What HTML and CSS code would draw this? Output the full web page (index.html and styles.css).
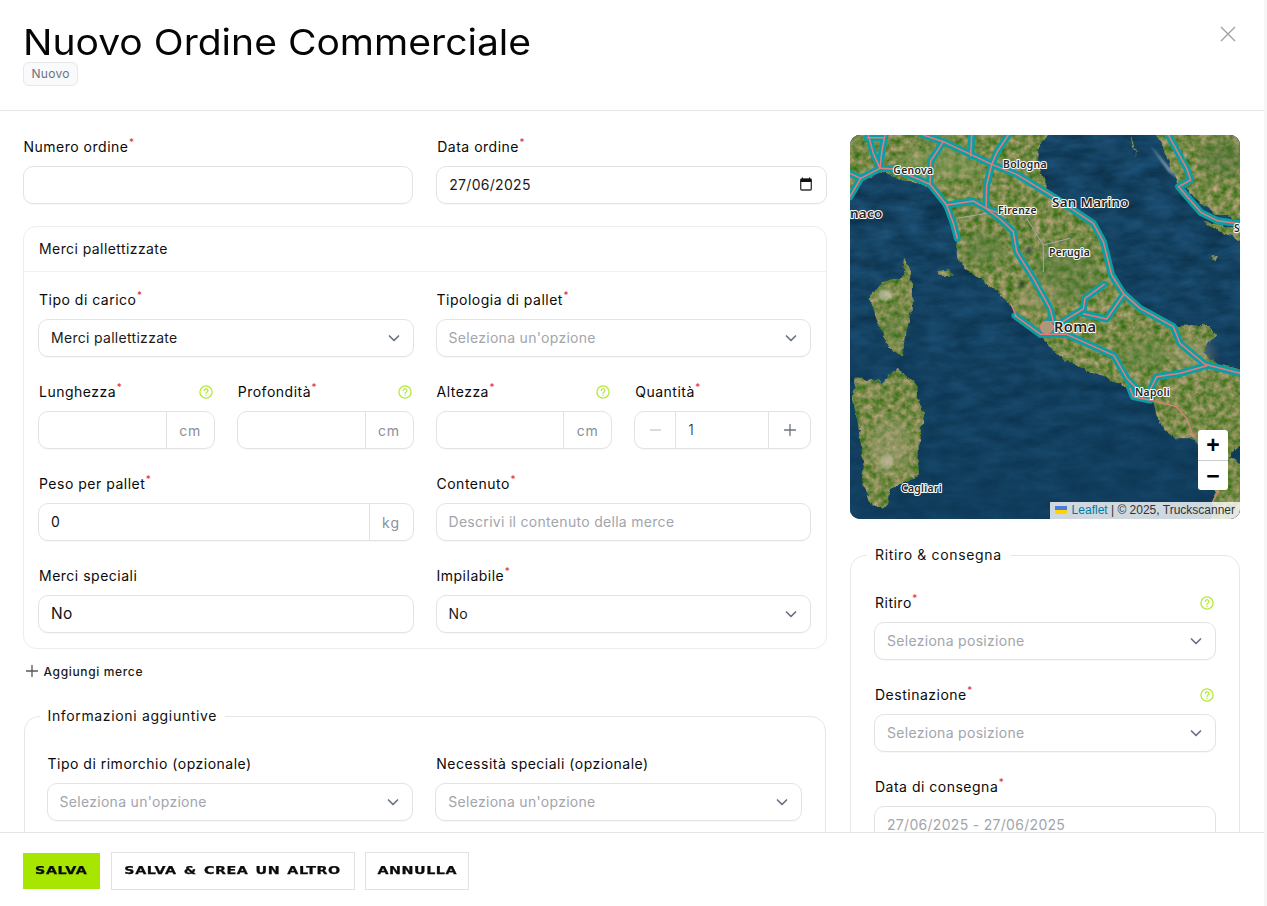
FILE: index.html
```html
<!DOCTYPE html>
<html lang="it">
<head>
<meta charset="utf-8">
<title>Nuovo Ordine Commerciale</title>
<link rel="stylesheet" href="styles.css">
</head>
<body>
<svg class="sprite" aria-hidden="true">
  <defs>
    <symbol id="chev" viewBox="0 0 16 16"><path d="M3.5 6l4.5 4.5L12.5 6" fill="none" stroke="currentColor" stroke-width="1.7" stroke-linecap="round" stroke-linejoin="round"/></symbol>
    <symbol id="help" viewBox="0 0 14 14"><circle cx="7" cy="7" r="6.1" fill="none" stroke="currentColor" stroke-width="1.3"/><path d="M5.3 5.5a1.8 1.8 0 1 1 2.8 1.5c-.7.4-1.1.8-1.1 1.4" fill="none" stroke="currentColor" stroke-width="1.2" stroke-linecap="round"/><circle cx="7" cy="10.2" r=".7" fill="currentColor"/></symbol>
    <symbol id="plus" viewBox="0 0 14 14"><path d="M7 1.5v11M1.5 7h11" fill="none" stroke="currentColor" stroke-width="1.3" stroke-linecap="round"/></symbol>
  </defs>
</svg>
<div class="page">
  <header class="head">
    <div>
      <h1 class="title">Nuovo Ordine Commerciale</h1>
      <span class="badge">Nuovo</span>
    </div>
    <svg class="close" viewBox="0 0 16 16"><path d="M1 1l14 14M15 1L1 15" fill="none" stroke="currentColor" stroke-width="1.4"/></svg>
  </header>

  <main class="body">
    <section class="left">
      <div class="grid2 top-grid">
        <div class="field">
          <div class="label"><span>Numero ordine<sup>*</sup></span></div>
          <div class="control"></div>
        </div>
        <div class="field">
          <div class="label"><span>Data ordine<sup>*</sup></span></div>
          <div class="control between">
            <span class="value date-value">27/06/2025</span>
            <svg class="cal" viewBox="0 0 12 14"><path d="M2.5 0.5v2M9.5 0.5v2" stroke="#111" stroke-width="1.2"/><rect x="0.7" y="2" width="10.6" height="11" rx="1" fill="none" stroke="#333" stroke-width="1.3"/><rect x="0.7" y="2" width="10.6" height="3" fill="#111"/></svg>
          </div>
        </div>
      </div>

      <div class="card">
        <div class="card-head">Merci pallettizzate</div>
        <div class="grid4">
          <div class="field span2">
            <div class="label"><span>Tipo di carico<sup>*</sup></span></div>
            <div class="control between"><span class="value">Merci pallettizzate</span><svg class="chev"><use href="#chev"/></svg></div>
          </div>
          <div class="field span2">
            <div class="label"><span>Tipologia di pallet<sup>*</sup></span></div>
            <div class="control between"><span class="placeholder">Seleziona un'opzione</span><svg class="chev"><use href="#chev"/></svg></div>
          </div>

          <div class="field">
            <div class="label"><span>Lunghezza<sup>*</sup></span><svg class="help"><use href="#help"/></svg></div>
            <div class="control joined"><span class="grow"></span><span class="suffix">cm</span></div>
          </div>
          <div class="field">
            <div class="label"><span>Profondità<sup>*</sup></span><svg class="help"><use href="#help"/></svg></div>
            <div class="control joined"><span class="grow"></span><span class="suffix">cm</span></div>
          </div>
          <div class="field">
            <div class="label"><span>Altezza<sup>*</sup></span><svg class="help"><use href="#help"/></svg></div>
            <div class="control joined"><span class="grow"></span><span class="suffix">cm</span></div>
          </div>
          <div class="field">
            <div class="label"><span>Quantità<sup>*</sup></span></div>
            <div class="control joined">
              <span class="step step-off"></span>
              <span class="grow qty">1</span>
              <span class="step step-on"><svg class="step-icon"><use href="#plus"/></svg></span>
            </div>
          </div>

          <div class="field span2">
            <div class="label"><span>Peso per pallet<sup>*</sup></span></div>
            <div class="control joined"><span class="grow qty-wide">0</span><span class="suffix suffix-kg">kg</span></div>
          </div>
          <div class="field span2">
            <div class="label"><span>Contenuto<sup>*</sup></span></div>
            <div class="control"><span class="placeholder">Descrivi il contenuto della merce</span></div>
          </div>

          <div class="field span2">
            <div class="label"><span>Merci speciali</span></div>
            <div class="control"><span class="value value-large">No</span></div>
          </div>
          <div class="field span2">
            <div class="label"><span>Impilabile<sup>*</sup></span></div>
            <div class="control between"><span class="value">No</span><svg class="chev"><use href="#chev"/></svg></div>
          </div>
        </div>
      </div>

      <button class="add" type="button"><svg class="add-icon"><use href="#plus"/></svg>Aggiungi merce</button>

      <fieldset class="group group-info">
        <legend>Informazioni aggiuntive</legend>
        <div class="grid2 info-grid">
          <div class="field">
            <div class="label"><span>Tipo di rimorchio (opzionale)</span></div>
            <div class="control between"><span class="placeholder">Seleziona un'opzione</span><svg class="chev"><use href="#chev"/></svg></div>
          </div>
          <div class="field">
            <div class="label"><span>Necessità speciali (opzionale)</span></div>
            <div class="control between"><span class="placeholder">Seleziona un'opzione</span><svg class="chev"><use href="#chev"/></svg></div>
          </div>
        </div>
      </fieldset>
    </section>

    <aside class="right">
      <div class="map">
        <svg class="map-art" viewBox="30 30 1170 1152">
          <defs>
            <filter id="landTex" x="0" y="0" width="100%" height="100%" color-interpolation-filters="sRGB">
              <feTurbulence type="fractalNoise" baseFrequency="0.035" numOctaves="3" seed="3" result="warp"/>
              <feDisplacementMap in="SourceGraphic" in2="warp" scale="22" xChannelSelector="R" yChannelSelector="G" result="shape"/>
              <feTurbulence type="fractalNoise" baseFrequency="0.05" numOctaves="5" seed="11" result="noise"/>
              <feColorMatrix in="noise" values="0.75 0 0 0 0.09  0.3 0 0 0 0.39  0.6 0 0 0 -0.02  0 0 0 0 1" result="tex"/>
              <feComposite in="tex" in2="shape" operator="in"/>
            </filter>
            <filter id="seaTex" x="0" y="0" width="100%" height="100%" color-interpolation-filters="sRGB">
              <feTurbulence type="fractalNoise" baseFrequency="0.012 0.03" numOctaves="4" seed="4"/>
              <feColorMatrix values="0.1 0 0 0 0.03  0.18 0 0 0 0.17  0.25 0 0 0 0.26  0 0 0 0 1"/>
              <feComposite in2="SourceAlpha" operator="in"/>
            </filter>
            <filter id="soft"><feGaussianBlur stdDeviation="16"/></filter>
            <filter id="softer"><feGaussianBlur stdDeviation="3"/></filter>
            <linearGradient id="deep" x1="0" y1="0" x2="0" y2="1">
              <stop offset="0.3" stop-color="#0e3a5a" stop-opacity="0"/>
              <stop offset="1" stop-color="#0e3a5a" stop-opacity=".6"/>
            </linearGradient>
            <g id="roads">
              <path d="M250 30L310 50L400 92L455 118L530 148L640 215L700 255L760 295L790 350L815 450L850 505L900 550L1000 605L1020 655L1095 718L1200 745"/>
              <path d="M395 30L392 92"/>
              <path d="M505 30L472 80L455 118L440 180L438 250L480 282L520 320L530 380L580 460L630 550L640 590L622 590"/>
              <path d="M120 130L165 132L270 178L320 240L340 295L352 340"/>
              <path d="M320 240L400 228L438 250L470 262"/>
              <path d="M310 50L272 108L270 178"/>
              <path d="M85 30L100 85L120 130L62 160L30 215"/>
              <path d="M135 30L125 82L120 130M30 145L62 160M82 38L132 38"/>
              <path d="M525 572L602 628L680 628L822 692L862 762L892 792L930 812"/>
              <path d="M668 590L730 552L735 520L792 478"/>
              <path d="M730 566L800 582L850 510"/>
              <path d="M1100 722L1020 745L950 755L930 795"/>
              <path d="M985 30L1040 130L1052 165L1016 185L1082 262L1132 287L1200 296"/>
              <path d="M870 790L880 815L930 825"/>
            </g>
          </defs>
          <rect x="30" y="30" width="1170" height="1152" filter="url(#seaTex)"/>
          <rect x="30" y="30" width="1170" height="1152" fill="url(#deep)"/>
          <g filter="url(#landTex)">
            <path d="M20 20H632L596 68L590 110L604 150L622 200L700 258L762 292L790 350L815 440L850 500L905 550L1000 602L1098 600L1125 625L1090 682L1132 716L1220 738V945L1180 975L1170 1000L1220 1020V1200H1112L1125 1100L1105 1060L1090 990L1055 940L1005 940L960 900L940 832L885 820L860 790L800 760L720 730L640 680L600 630L530 580L505 530L430 470L356 412L350 345L330 265L272 190L125 140L60 170L20 205Z"/>
            <path d="M195 402L210 420L216 480L215 560L182 695L140 655L112 595L85 522L128 472L186 455Z"/>
            <path d="M170 728L226 772L250 868L236 950L236 1052L150 1092L140 1142L100 1148L62 1072L72 1000L35 800L50 760L130 772Z"/>
            <path d="M950 20H1220V292L1130 268L1085 235L1016 178L985 110Z"/>
            <path d="M870 30L892 95L875 60Z"/>
            <path d="M1090 290L1220 310V355L1140 320Z"/>
            <path d="M295 438L335 432L340 452L300 452Z"/>
            <path d="M1105 395L1140 390L1130 405Z"/>
          </g>
          <g filter="url(#soft)" opacity=".4">
            <ellipse cx="680" cy="450" rx="100" ry="80" fill="#4e7a38"/>
            <ellipse cx="430" cy="370" rx="60" ry="50" fill="#4e7a38"/>
            <ellipse cx="910" cy="690" rx="70" ry="45" fill="#5a8440"/>
            <ellipse cx="1150" cy="100" rx="70" ry="50" fill="#4a6d3a"/>
            <ellipse cx="160" cy="600" rx="25" ry="50" fill="#4e7a38"/>
            <ellipse cx="300" cy="120" rx="120" ry="50" fill="#85a062"/>
            <ellipse cx="1060" cy="690" rx="60" ry="45" fill="#b2a98a"/>
            <ellipse cx="150" cy="960" rx="60" ry="80" fill="#b0a684"/>
            <ellipse cx="600" cy="520" rx="60" ry="40" fill="#a99f78"/>
          </g>
          <g filter="url(#softer)" opacity=".6">
            <path d="M930 60L1020 165L985 140Z" fill="#c7d3d8"/>
            <ellipse cx="135" cy="510" rx="20" ry="18" fill="#cfcab8"/>
            <ellipse cx="140" cy="1010" rx="20" ry="24" fill="#c7bfa2"/>
            <circle cx="545" cy="478" r="9" fill="#1d2a25"/>
            <circle cx="566" cy="376" r="9" fill="#1d3a48"/>
          </g>
          <g fill="none" stroke-linejoin="round" stroke-linecap="round">
            <path d="M560 280L610 360L610 440M610 360L690 340M350 280L440 265" stroke="#a9a7b4" stroke-width="3"/>
            <use href="#roads" class="road-casing"/>
            <use href="#roads" class="road-core"/>
            <path d="M930 825L1010 845L1040 880L1060 935M1135 1100L1118 1130M512 535L528 572" stroke="#e87c7c" stroke-width="3.5"/>
            <circle cx="620" cy="607" r="18" stroke="#e87c7c" stroke-width="4" fill="#a89a78"/>
          </g>
          <g class="map-labels">
            <text class="city" x="160" y="146">Genova</text>
            <text class="city" x="489" y="128">Bologna</text>
            <text class="city" x="474" y="266">Firenze</text>
            <text class="city" x="627" y="392">Perugia</text>
            <text class="city" x="885" y="812">Napoli</text>
            <text class="city" x="183" y="1100">Cagliari</text>
            <text class="city" x="1182" y="320">S</text>
            <text class="major" x="636" y="246">San Marino</text>
            <text class="major" x="30" y="278">naco</text>
            <text class="major major-lg" x="642" y="620">Roma</text>
          </g>
        </svg>
        <div class="zoom-ctl">
          <span class="zoom-btn">+</span>
          <span class="zoom-btn">−</span>
        </div>
        <div class="attrib">
          <svg class="flag" viewBox="0 0 12 8"><rect width="12" height="4" fill="#4c7be1"/><rect y="4" width="12" height="4" fill="#ffd500"/></svg>
          <span class="leaflet">Leaflet</span> | © 2025, Truckscanner
        </div>
      </div>

      <fieldset class="group group-route">
        <legend>Ritiro &amp; consegna</legend>
        <div class="stack">
          <div class="field">
            <div class="label"><span>Ritiro<sup>*</sup></span><svg class="help"><use href="#help"/></svg></div>
            <div class="control between"><span class="placeholder">Seleziona posizione</span><svg class="chev"><use href="#chev"/></svg></div>
          </div>
          <div class="field">
            <div class="label"><span>Destinazione<sup>*</sup></span><svg class="help"><use href="#help"/></svg></div>
            <div class="control between"><span class="placeholder">Seleziona posizione</span><svg class="chev"><use href="#chev"/></svg></div>
          </div>
          <div class="field">
            <div class="label"><span>Data di consegna<sup>*</sup></span></div>
            <div class="control"><span class="placeholder">27/06/2025 - 27/06/2025</span></div>
          </div>
        </div>
      </fieldset>
    </aside>
  </main>

  <footer class="foot">
    <button class="btn btn-primary" type="button"><span class="btn-text">SALVA</span></button>
    <button class="btn btn-again" type="button"><span class="btn-text">SALVA &amp; CREA UN ALTRO</span></button>
    <button class="btn btn-cancel" type="button"><span class="btn-text">ANNULLA</span></button>
  </footer>
</div>
</body>
</html>
```

FILE: styles.css
```css
* { box-sizing: border-box; }
html, body { margin: 0; height: 100%; overflow: hidden; }
body {
  background: #f6f6f6;
  color: #111;
  font-family: "Inter", "Liberation Sans", sans-serif;
  font-size: 14px;
  letter-spacing: .3px;
}
.sprite { width: 0; height: 0; display: block; }

.page {
  width: calc(100% - 3px);
  height: 100%;
  background: #fff;
  display: flex;
  flex-direction: column;
  overflow: hidden;
}

/* header */
.head {
  flex: none;
  height: 111px;
  border-bottom: 1px solid #e5e5e5;
  padding: 22px 28px 0 23px;
  display: flex;
  justify-content: space-between;
  align-items: flex-start;
}
.title {
  margin: 0;
  font-size: 36px;
  line-height: 40px;
  font-weight: 400;
  letter-spacing: 0;
  color: #050505;
  white-space: nowrap;
  transform: scaleX(1.085);
  transform-origin: left center;
}
.badge {
  display: inline-block;
  height: 24px;
  line-height: 22px;
  padding: 0 7.5px;
  border: 1px solid #e8e8ea;
  border-radius: 6px;
  background: #f9fafb;
  color: #6b7280;
  font-size: 12px;
  letter-spacing: .3px;
}
.close { width: 16px; height: 16px; color: #a1a1aa; margin-top: 4px; }

/* body */
.body {
  flex: 1;
  min-height: 0;
  overflow: hidden;
  padding: 24px 24px 0 22.5px;
  display: grid;
  grid-template-columns: 804.5px 390px;
  column-gap: 23px;
  align-items: start;
}
.left { padding-top: 2px; }

.grid2 { display: grid; grid-template-columns: 1fr 1fr; }
.top-grid { column-gap: 23px; }
.info-grid { column-gap: 22px; }
.grid4 {
  display: grid;
  grid-template-columns: repeat(4, 1fr);
  column-gap: 22px;
  row-gap: 25px;
  padding: 18px 15px 15px 14.5px;
}
.span2 { grid-column: span 2; }
.stack { display: flex; flex-direction: column; gap: 25px; }

.field { display: flex; flex-direction: column; gap: 9px; min-width: 0; }
.label {
  height: 20px;
  line-height: 20px;
  padding: 0 2px 0 1px;
  display: flex;
  justify-content: space-between;
  align-items: center;
  white-space: nowrap;
  color: #0a0a0a;
  font-weight: 400;
  letter-spacing: .5px;
}
sup {
  color: #e5263a;
  font-size: 10px;
  line-height: 0;
  vertical-align: baseline;
  position: relative;
  top: -6px;
  left: .5px;
}
.help { width: 14px; height: 14px; color: #b4e93a; flex: none; }

.control {
  height: 38px;
  border: 1px solid #e2e3e5;
  border-radius: 10px;
  background: #fff;
  padding: 0 12px 2px;
  display: flex;
  align-items: center;
  box-shadow: 0 1px 1px rgba(0, 0, 0, .03);
  overflow: hidden;
}
.between { justify-content: space-between; }
.joined { padding: 0; }
.value { color: #1a1a1a; white-space: nowrap; }
.value-large { font-size: 15.5px; color: #111; }
.date-value { letter-spacing: .3px; }
.placeholder { color: #a2a5ac; white-space: nowrap; }
.chev { width: 16px; height: 16px; color: #6b7280; flex: none; margin-right: -1px; position: relative; top: 1px; }
.cal { width: 12px; height: 14px; flex: none; margin-right: 2px; }

.grow { flex: 1; min-width: 0; height: 100%; display: flex; align-items: center; padding-bottom: 2px; }
.suffix {
  flex: none;
  width: 48px;
  height: 100%;
  border-left: 1px solid #e2e3e5;
  display: flex;
  align-items: center;
  justify-content: center;
  color: #8b8f98;
  letter-spacing: .9px;
}
.suffix-kg { width: 44px; }
.qty { padding-left: 12px; color: #222; font-weight: 300; }
.qty-wide { padding-left: 12px; }
.step {
  flex: none;
  width: 41px;
  height: 100%;
  display: flex;
  align-items: center;
  justify-content: center;
}
.step-off { color: #d9dbdf; border-right: 1px solid #e2e3e5; }
.step-off::before { content: ""; width: 11px; height: 1.3px; background: currentColor; }
.step-on { color: #6b7280; border-left: 1px solid #e2e3e5; width: 42px; }
.step-icon { width: 14px; height: 14px; }

/* cards */
.card {
  margin-top: 22px;
  border: 1px solid #eceded;
  border-radius: 13px;
}
.card-head {
  height: 45px;
  line-height: 44px;
  padding-left: 15.5px;
  border-bottom: 1px solid #f0f0f0;
  font-weight: 400;
  letter-spacing: .42px;
}
.add {
  margin: 12px 0 25px;
  height: 20px;
  padding: 0 0 0 2px;
  border: 0;
  background: none;
  display: flex;
  align-items: center;
  gap: 5px;
  font: 500 12px "Inter", "Liberation Sans", sans-serif;
  letter-spacing: .65px;
  color: #1a1a1a;
}
.add-icon { width: 14px; height: 14px; color: #555; }

.group {
  margin: 0;
  min-width: 0;
  border: 1px solid #e5e6e8;
  border-radius: 15px;
}
.group legend {
  height: 20px;
  line-height: 20px;
  padding: 0 8px;
  margin-left: -7px;
  white-space: nowrap;
  font-weight: 400;
  letter-spacing: .65px;
}
.group-info { margin: 0 1px; padding: 28px 23px 40px 22px; }
.group-route { margin-top: 26px; padding: 28px 23px 30px 23px; }

/* map */
.map {
  position: relative;
  height: 384px;
  border-radius: 10px;
  overflow: hidden;
  background: #174a6c;
}
.map-art { display: block; width: 100%; height: 100%; }
.road-casing { stroke: #0d9ea4; stroke-width: 21px; }
.road-core { stroke: #e97a7a; stroke-width: 4.5px; }
.map-labels text {
  font-family: "Noto Sans", "DejaVu Sans", sans-serif;
  font-weight: 600;
  fill: #262626;
  stroke: #fff;
  stroke-width: 6px;
  stroke-linejoin: round;
  paint-order: stroke;
  letter-spacing: 1px;
}
.city { font-size: 31px; }
.major { font-size: 40px; }
.major-lg { font-size: 44px; }

.zoom-ctl {
  position: absolute;
  right: 12px;
  bottom: 29px;
  width: 30px;
  border-radius: 3px;
  overflow: hidden;
  background: #fff;
  display: flex;
  flex-direction: column;
}
.zoom-btn {
  height: 30px;
  display: flex;
  align-items: center;
  justify-content: center;
  font: 700 23px/30px "Liberation Sans", sans-serif;
  letter-spacing: 0;
  color: #000;
}
.zoom-btn + .zoom-btn { border-top: 1px solid #ccc; }

.attrib {
  position: absolute;
  right: 0;
  bottom: 0;
  height: 17px;
  padding: 0 5px;
  background: rgba(255, 255, 255, .8);
  font: 12px/17px "Liberation Sans", Arial, sans-serif;
  letter-spacing: 0;
  color: #333;
  white-space: nowrap;
}
.flag { width: 12px; height: 8px; margin-right: 1px; }
.leaflet { color: #0078a8; }

/* footer */
.foot {
  flex: none;
  height: 74px;
  border-top: 1px solid #e5e5e5;
  background: #fff;
  padding: 19px 0 0 23px;
  display: flex;
  align-items: flex-start;
  gap: 10.5px;
}
.btn {
  height: 38px;
  border: 1.5px solid #e2e2e2;
  background: #fff;
  padding: 0 0 2px;
  display: flex;
  align-items: center;
  justify-content: center;
  color: #0b0b0b;
  font: 700 10.5px "DejaVu Sans", sans-serif;
  letter-spacing: .4px;
  word-spacing: 1.2px;
  white-space: nowrap;
  -webkit-text-stroke: .25px #0b0b0b;
}
.btn-text { display: inline-block; transform: scaleX(1.36); }
.btn-primary { width: 77px; height: 36px; margin-top: 1px; background: #a6e600; border: 0; }
.btn-again { width: 244px; }
.btn-cancel { width: 104px; }
```
